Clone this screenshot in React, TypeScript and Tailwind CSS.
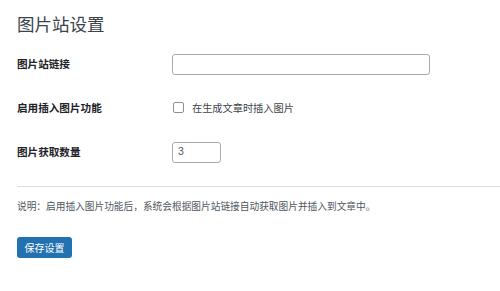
import React from "react";

export default function App() {
  return (
    <div className="w-[500px] h-[291px] bg-white overflow-hidden font-['Noto_Sans_CJK_SC','Noto_Sans',sans-serif]">
      <div className="pl-[17px] pt-[12px]">
        <h1 className="h-[24px] leading-[24px] text-[17.5px] font-normal text-[#3c434a]">图片站设置</h1>
        <div className="mt-[6px] flex flex-col">
          <div className="h-[44px] flex items-center">
            <div className="w-[155px] text-[10.6px] font-bold text-[#1d2327]">图片站链接</div>
            <input
              type="text"
              className="w-[258px] h-[21px] border border-[#a7aaad] rounded-[3px] bg-white outline-none"
            />
          </div>
          <div className="h-[44px] flex items-center">
            <div className="w-[155px] text-[10.6px] font-bold text-[#1d2327]">启用插入图片功能</div>
            <label className="flex items-center">
              <span className="w-[11px] h-[11px] border border-[#8c8f94] rounded-[2px] bg-white ml-[1px]" />
              <span className="ml-[8px] text-[10.2px] text-[#3c434a]">在生成文章时插入图片</span>
            </label>
          </div>
          <div className="h-[44px] flex items-center">
            <div className="w-[155px] text-[10.6px] font-bold text-[#1d2327]">图片获取数量</div>
            <div className="w-[49px] h-[21px] border border-[#a7aaad] rounded-[3px] bg-white flex items-center pl-[5px] text-[10.5px] text-[#50575e] font-['Liberation_Sans',sans-serif]">
              3
            </div>
          </div>
        </div>
        <div className="mt-[12px] border-t border-[#dcdcde]" />
        <p className="mt-[11px] h-[16px] leading-[16px] text-[9.7px] text-[#50575e]">
          说明：启用插入图片功能后，系统会根据图片站链接自动获取图片并插入到文章中。
        </p>
        <button className="mt-[23px] w-[55px] h-[21px] bg-[#2271b1] rounded-[3px] text-white text-[10px] flex items-center justify-center">
          保存设置
        </button>
      </div>
    </div>
  );
}
